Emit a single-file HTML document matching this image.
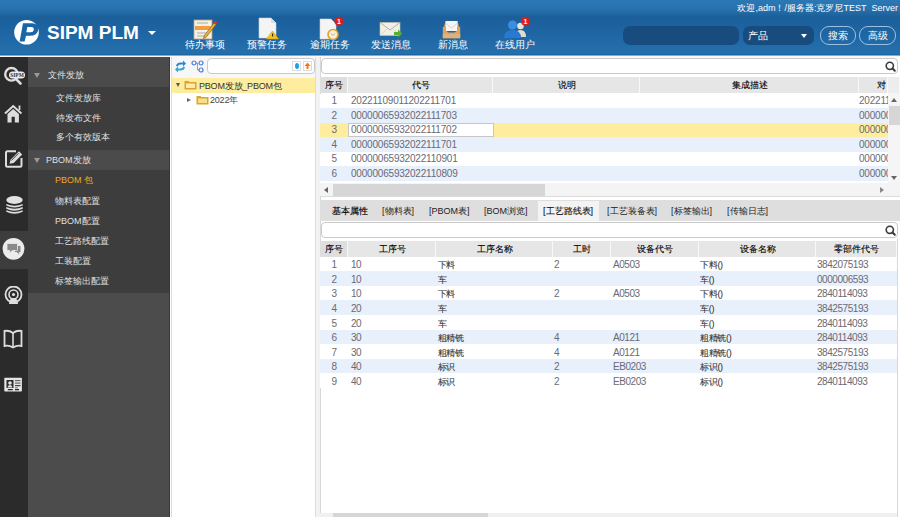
<!DOCTYPE html>
<html><head><meta charset="utf-8">
<style>
*{box-sizing:border-box;margin:0;padding:0}
html,body{width:900px;height:517px;overflow:hidden;background:#fff;font-family:"Liberation Sans",sans-serif}
.a{position:absolute}
#hdr{left:0;top:0;width:900px;height:58px;background:linear-gradient(#2b78b4 0px,#2672ae 9px,#1b5f9a 17px,#1d64a1 30px,#2470ad 54px,#1a5e9a 54.8px,#1a5e9a 55.4px,#f6f8fa 55.6px,#f8f9fa 58px);}
#hline{display:none}
.brand{left:47px;top:22px;color:#fff;font-weight:bold;font-size:19px;line-height:22px;white-space:nowrap}
.tb{color:#fff;font-size:10px;line-height:10px;white-space:nowrap;top:39.5px;text-align:center}
.welcome{right:2px;top:3px;color:#fff;font-size:9px;line-height:10px;white-space:nowrap}
#side1{left:0;top:57px;width:28px;height:460px;background:#2b2b2b}
#side2{left:28px;top:57px;width:142px;height:460px;background:#4c4c4c}
.mh{left:28px;width:141px;background:#4b4b4b}
.mi{left:28px;width:141px;background:#3d3d3d}
.mt{color:#e0e0e0;font-size:9px;line-height:12px;white-space:nowrap}
.tri{width:0;height:0;border-left:3.5px solid transparent;border-right:3.5px solid transparent;border-top:5px solid #999}
.inp{background:#fff;border:1px solid #c9c9c9;border-radius:4px}
.gh{top:77px;height:16px;background:#e6e6e6;border-right:1px solid #f8f8f8}
.ght{color:#000;font-size:9px;line-height:16px;text-align:center;white-space:nowrap;-webkit-text-stroke:0.12px #000}
.gr{height:14.6px}
.gt{color:#6a6a74;font-size:10px;letter-spacing:-0.45px;line-height:14px;white-space:nowrap}
.gt1{letter-spacing:-0.2px}
.gc{font-size:9px;letter-spacing:-0.3px;color:#333;-webkit-text-stroke:0.08px #333}
.num{text-align:center}
.tab{top:201.2px;color:#222;font-size:9px;line-height:21px;white-space:nowrap}

</style></head><body>
<div id="hdr" class="a"></div>
<div id="hline" class="a"></div>
<!-- logo -->
<svg class="a" style="left:10px;top:16px" width="34" height="32" viewBox="0 0 34 32">
 <circle cx="16.5" cy="16.2" r="12.3" fill="#fff"/>
 <path d="M13 7.3 L22 7.3 Q28.8 7.6 28.3 13.5 Q27.6 19.8 19.5 19.8 L16 19.8 L14.6 25.4 L9.6 25.4 Z" fill="#1a64a8"/>
 <path d="M17.3 11 L21.3 11 Q24.2 11.2 23.8 13.8 Q23.4 16.3 20.5 16.3 L16.3 16.3 Z" fill="#fff"/>
</svg>
<div class="a brand">SIPM PLM</div>
<div class="a" style="left:148px;top:31px;width:0;height:0;border-left:4px solid transparent;border-right:4px solid transparent;border-top:4px solid #fff"></div>

<!-- toolbar icons -->
<svg class="a" style="left:193px;top:19px" width="25" height="21" viewBox="0 0 25 21">
 <rect x="1" y="1" width="18" height="19" fill="#f4f0e6" stroke="#b9a27a" stroke-width="0.8"/>
 <rect x="2" y="7" width="16" height="4" fill="#f0a040"/>
 <line x1="4" y1="4" x2="15" y2="4" stroke="#aaa" stroke-width="1"/>
 <line x1="4" y1="14" x2="15" y2="14" stroke="#aaa" stroke-width="1"/>
 <line x1="4" y1="17" x2="13" y2="17" stroke="#aaa" stroke-width="1"/>
 <path d="M11 17 L21 4 L23 5.5 L13 18.5 L10.5 19.5 Z" fill="#e8b030" stroke="#7a5a20" stroke-width="0.6"/>
 <circle cx="22.5" cy="3.5" r="1.5" fill="#e03030"/>
</svg>
<svg class="a" style="left:257px;top:17px" width="23" height="23" viewBox="0 0 23 23">
 <path d="M2 1 L14 1 L19 6 L19 21 L2 21 Z" fill="#f4f4f4" stroke="#d0d0d0" stroke-width="0.6"/>
 <path d="M14 1 L14 6 L19 6" fill="#ddd"/>
 <path d="M15.5 14 L21.5 22 L9.5 22 Z" fill="#f5c320" stroke="#c89a10" stroke-width="0.6"/>
 <rect x="15" y="16.5" width="1.2" height="3" fill="#333"/>
</svg>
<svg class="a" style="left:319px;top:15px" width="26" height="25" viewBox="0 0 26 25">
 <path d="M1 4 L12 4 L17 9 L17 24 L1 24 Z" fill="#f4f4f4" stroke="#d0d0d0" stroke-width="0.6"/>
 <circle cx="14" cy="19.5" r="5" fill="#f8f0d8" stroke="#e8a020" stroke-width="1.6"/>
 <path d="M12 18.5 L14 20.5 L16 18.5" stroke="#999" stroke-width="0.8" fill="none"/>
 <circle cx="20" cy="6.3" r="4.6" fill="#d81e1e"/>
 <text x="20" y="9" font-size="7" font-weight="bold" fill="#fff" text-anchor="middle" font-family="Liberation Sans">1</text>
</svg>
<svg class="a" style="left:379px;top:21px" width="24" height="17" viewBox="0 0 24 17">
 <rect x="1" y="1.5" width="20" height="13" fill="#f2efe6" stroke="#c8c0b0" stroke-width="0.6"/>
 <path d="M1 1.5 L11 9 L21 1.5" stroke="#a8a090" stroke-width="0.8" fill="none"/>
 <path d="M1 14.5 L8 8 M21 14.5 L14 8" stroke="#c8c0b0" stroke-width="0.6"/>
 <path d="M15 11 L19 11 L19 8.5 L23 12.5 L19 16.5 L19 14 L15 14 Z" fill="#5ab030"/>
</svg>
<svg class="a" style="left:442px;top:20px" width="20" height="19" viewBox="0 0 20 19">
 <path d="M1.5 7 L3.5 1.5 L15.5 1.5 L17.5 7 Z" fill="#c89050"/>
 <rect x="3.5" y="1" width="12" height="10" fill="#f6f6f6"/>
 <path d="M3.5 3 L9.5 8 L15.5 3" stroke="#cfcfcf" stroke-width="0.9" fill="none"/>
 <path d="M0.8 7 L3.5 7 L3.5 10.5 L6.5 12.5 L12.5 12.5 L15.5 10.5 L15.5 7 L18.2 7 L18.2 18.2 L0.8 18.2 Z" fill="#dba565"/>
 <rect x="0.8" y="14" width="17.4" height="4.2" fill="#e3b175"/>
</svg>
<svg class="a" style="left:503px;top:16px" width="28" height="23" viewBox="0 0 28 23">
 <circle cx="17.5" cy="10" r="3.3" fill="#e8e4dc"/>
 <path d="M12 21 Q12 14 17.5 14 Q23 14 23 21 Z" fill="#e0dcd2"/>
 <circle cx="9.5" cy="9" r="4.5" fill="#3a8ee0"/>
 <path d="M1 22 Q1 14 9.5 14 Q18 14 18 22 Z" fill="#2a78d0"/>
 <circle cx="22.5" cy="5.3" r="4.6" fill="#d81e1e"/>
 <text x="22.5" y="8" font-size="7" font-weight="bold" fill="#fff" text-anchor="middle" font-family="Liberation Sans">1</text>
</svg>

<div class="a tb" style="left:185px;width:39px">待办事项</div>
<div class="a tb" style="left:247px;width:38px">预警任务</div>
<div class="a tb" style="left:310px;width:38px">逾期任务</div>
<div class="a tb" style="left:371px;width:38px">发送消息</div>
<div class="a tb" style="left:438px;width:29px">新消息</div>
<div class="a tb" style="left:495px;width:38px">在线用户</div>
<div class="a welcome">欢迎,adm！/服务器:克罗尼TEST&nbsp; Server</div>

<!-- search controls -->
<div class="a" style="left:623px;top:26px;width:116px;height:19px;border-radius:7px;background:#194c7e"></div>
<div class="a" style="left:743px;top:26px;width:71px;height:19px;border-radius:7px;background:#194c7e"></div>
<div class="a" style="left:748px;top:26px;color:#fff;font-size:9.5px;line-height:19px">产品</div>
<div class="a" style="left:801px;top:34px;width:0;height:0;border-left:3.5px solid transparent;border-right:3.5px solid transparent;border-top:4px solid #fff"></div>
<div class="a" style="left:820px;top:26px;width:36px;height:19px;border-radius:9px;border:1px solid #9cc0e0;color:#fff;font-size:9.5px;line-height:17px;text-align:center">搜索</div>
<div class="a" style="left:859px;top:26px;width:37px;height:19px;border-radius:9px;border:1px solid #9cc0e0;color:#fff;font-size:9.5px;line-height:17px;text-align:center">高级</div>

<!-- sidebar -->
<div id="side1" class="a"></div>
<div id="side2" class="a"></div>
<div class="a mh" style="top:59px;height:28px"></div>
<div class="a mi" style="top:87px;height:62.5px"></div>
<div class="a mh" style="top:149.5px;height:20.5px"></div>
<div class="a mi" style="top:170px;height:123px"></div>
<div class="a" style="left:169px;top:57px;width:1px;height:460px;background:#383838"></div>
<div class="a" style="left:170px;top:57px;width:1px;height:460px;background:#fff"></div>
<div class="a" style="left:171px;top:57px;width:1px;height:460px;background:#dcdcdc"></div>

<div class="a tri" style="left:33.5px;top:73px"></div>
<div class="a mt" style="left:47.5px;top:69px">文件发放</div>
<div class="a mt" style="left:56px;top:92px">文件发放库</div>
<div class="a mt" style="left:56px;top:111.5px">待发布文件</div>
<div class="a mt" style="left:56px;top:131px">多个有效版本</div>
<div class="a tri" style="left:33.5px;top:157.5px"></div>
<div class="a mt" style="left:46px;top:154px">PBOM发放</div>
<div class="a mt" style="left:55px;top:173.5px;color:#f2a81c">PBOM 包</div>
<div class="a mt" style="left:55px;top:194.5px">物料表配置</div>
<div class="a mt" style="left:55px;top:214.5px">PBOM配置</div>
<div class="a mt" style="left:55px;top:234.5px">工艺路线配置</div>
<div class="a mt" style="left:55px;top:254.5px">工装配置</div>
<div class="a mt" style="left:55px;top:275px">标签输出配置</div>

<!-- sidebar icons -->
<div class="a" style="left:0;top:230.5px;width:28px;height:38px;background:#3d3d3d"></div>
<svg class="a" style="left:3px;top:66px" width="24" height="20" viewBox="0 0 24 20">
 <circle cx="8.5" cy="8.3" r="6.3" fill="none" stroke="#ddd" stroke-width="2.4"/>
 <line x1="13" y1="13" x2="17.5" y2="17.5" stroke="#ddd" stroke-width="2.6" stroke-linecap="round"/>
 <rect x="6" y="5.5" width="16" height="7" rx="3.5" fill="#eee"/>
 <text x="14" y="11" font-size="5.5" font-weight="bold" fill="#333" text-anchor="middle" font-family="Liberation Serif">SIPM</text>
</svg>
<svg class="a" style="left:4px;top:104px" width="19" height="20" viewBox="0 0 19 20">
 <path d="M1 9.5 L9.2 2 L17.4 9.5" fill="none" stroke="#ddd" stroke-width="2"/>
 <path d="M3.5 10 L9.2 5 L14.9 10 L14.9 18.5 L10.8 18.5 L10.8 12.8 L7.6 12.8 L7.6 18.5 L3.5 18.5 Z" fill="#ddd"/>
 <rect x="14.6" y="1.5" width="1.8" height="4.5" fill="#ddd"/>
</svg>
<svg class="a" style="left:4px;top:149px" width="20" height="20" viewBox="0 0 20 20">
 <path d="M12 2.2 L3.5 2.2 Q2 2.2 2 3.7 L2 16.3 Q2 17.8 3.5 17.8 L16 17.8 Q17.5 17.8 17.5 16.3 L17.5 9" fill="none" stroke="#ddd" stroke-width="2"/>
 <path d="M5.5 14.8 L6.5 10.8 L15 2.3 L18.2 5.5 L9.7 14 Z" fill="#ddd"/>
 <path d="M7.3 11.5 L14.5 4.3" stroke="#2b2b2b" stroke-width="0.9"/>
</svg>
<svg class="a" style="left:5.5px;top:195.5px" width="18" height="19" viewBox="0 0 18 19">
 <ellipse cx="8.5" cy="4" rx="8.2" ry="3.9" fill="#e2e2e2"/>
 <path d="M0.3 8 Q8.5 11.5 16.7 8 L16.7 9.5 Q8.5 13.5 0.3 9.5 Z" fill="#ddd"/>
 <path d="M0.3 11 Q8.5 14.5 16.7 11 L16.7 12.8 Q8.5 16.5 0.3 12.8 Z" fill="#ddd"/>
 <path d="M0.3 14.2 Q8.5 17.7 16.7 14.2 L16.7 15.8 Q8.5 19.5 0.3 15.8 Z" fill="#ddd"/>
</svg>
<svg class="a" style="left:2px;top:237px" width="24" height="24" viewBox="0 0 24 24">
 <circle cx="11.5" cy="11.8" r="10.9" fill="#ececec"/>
 <path d="M13.5 8.5 L18.5 8.5 Q19 8.5 19 9 L19 15 Q19 15.5 18.5 15.5 L17.5 15.5 L17.8 18.5 L14.8 15.5 L12 15.5 Z" fill="#8a8a8a" stroke="#ececec" stroke-width="1"/>
 <path d="M6 6.5 L14.5 6.5 Q15.5 6.5 15.5 7.5 L15.5 12.5 Q15.5 13.5 14.5 13.5 L10.5 13.5 L7.5 16.5 L8 13.5 L6 13.5 Q5 13.5 5 12.5 L5 7.5 Q5 6.5 6 6.5 Z" fill="#8a8a8a" stroke="#ececec" stroke-width="0.8"/>
</svg>
<svg class="a" style="left:4px;top:286px" width="20" height="19" viewBox="0 0 20 19">
 <circle cx="9.5" cy="8.5" r="8" fill="none" stroke="#ddd" stroke-width="1.8"/>
 <circle cx="9.5" cy="8.5" r="4.5" fill="none" stroke="#ddd" stroke-width="1.6"/>
 <circle cx="9.5" cy="8.5" r="1.6" fill="#ddd"/>
 <path d="M5 18 Q5 12 9.5 12 Q14 12 14 18 Z" fill="#ddd"/>
</svg>
<svg class="a" style="left:3px;top:329px" width="20" height="20" viewBox="0 0 20 20">
 <path d="M1.5 2 Q6 1 10 4 Q14 1 18.5 2 L18.5 17 Q14 16 10 18.5 Q6 16 1.5 17 Z" fill="none" stroke="#ddd" stroke-width="1.8"/>
 <line x1="10" y1="4" x2="10" y2="18" stroke="#ddd" stroke-width="1.6"/>
</svg>
<svg class="a" style="left:4px;top:377px" width="19" height="16" viewBox="0 0 19 16">
 <rect x="0.3" y="0.8" width="17.6" height="13.8" rx="0.8" fill="#e6e6e6"/>
 <rect x="2.5" y="3" width="7" height="8" fill="#2b2b2b"/>
 <circle cx="6" cy="6" r="1.8" fill="#e6e6e6"/>
 <path d="M3.5 10.5 Q3.8 8 6 8 Q8.2 8 8.5 10.5 Z" fill="#e6e6e6"/>
 <rect x="11" y="3" width="5.5" height="1.2" fill="#666"/>
 <rect x="11" y="5.5" width="5.5" height="1.2" fill="#666"/>
 <rect x="11" y="8" width="5.5" height="1.2" fill="#444"/>
 <rect x="11" y="10.3" width="3" height="1" fill="#777"/>
 <rect x="3.8" y="12" width="5" height="1.3" fill="#2b2b2b"/>
 <rect x="11" y="12" width="4" height="1.3" fill="#2b2b2b"/>
</svg>

<!-- tree panel -->
<div class="a" style="left:172px;top:57px;width:143px;height:20.5px;background:#f7f7f7"></div>
<div class="a" style="left:315px;top:57px;width:1px;height:460px;background:#dcdcdc"></div>
<div class="a" style="left:316px;top:57px;width:3.5px;height:460px;background:#f2f2f2"></div>
<div class="a" style="left:319.5px;top:57px;width:1px;height:460px;background:#d8d8d8"></div>
<svg class="a" style="left:174px;top:60px" width="13" height="13" viewBox="0 0 13 13">
 <path d="M2 6 Q2.5 2.5 6.5 2.5 L9 2.5 L9 0.5 L12 3.5 L9 6.5 L9 4.5 L6.5 4.5 Q4 4.5 4 6.5 Z" fill="#2a86d8"/>
 <path d="M11 7 Q10.5 10.5 6.5 10.5 L4 10.5 L4 12.5 L1 9.5 L4 6.5 L4 8.5 L6.5 8.5 Q9 8.5 9 6.5 Z" fill="#30a8d0"/>
</svg>
<svg class="a" style="left:191px;top:60px" width="13" height="13" viewBox="0 0 13 13">
 <circle cx="3" cy="3" r="2" fill="none" stroke="#4a7ad8" stroke-width="1.2"/>
 <circle cx="10" cy="3" r="2" fill="none" stroke="#4a7ad8" stroke-width="1.2"/>
 <circle cx="10" cy="10" r="2" fill="none" stroke="#4a7ad8" stroke-width="1.2"/>
 <path d="M5 3 L6.5 3 L6.5 10 L8 10" fill="none" stroke="#888" stroke-width="0.8"/>
</svg>
<div class="a inp" style="left:207px;top:58px;width:108px;height:16px"></div>
<div class="a" style="left:292px;top:61px;width:9px;height:10px;background:#fff;border:1px solid #ddd"></div>
<div class="a" style="left:294.5px;top:63px;width:4px;height:6px;border-radius:50%;background:#20a0e0"></div>
<div class="a" style="left:303px;top:61px;width:9px;height:10px;background:#fff;border:1px solid #ddd"></div>
<svg class="a" style="left:303px;top:61px" width="9" height="10" viewBox="0 0 9 10"><path d="M4.5 1.5 L7.5 5 L5.5 5 L5.5 8 L3.5 8 L3.5 5 L1.5 5 Z" fill="#f07820"/></svg>

<div class="a" style="left:172px;top:77.5px;width:143px;height:15px;background:#feed9e"></div>
<div class="a" style="left:176px;top:83px;width:0;height:0;border-left:2px solid transparent;border-right:2px solid transparent;border-top:4px solid #555"></div>
<svg class="a" style="left:183.5px;top:80px" width="13" height="10" viewBox="0 0 13 10">
 <path d="M0.5 1 L4.5 1 L5.5 2 L12.5 2 L12.5 9.5 L0.5 9.5 Z" fill="#dca42c"/>
 <rect x="2" y="3.5" width="9" height="4.5" fill="#fcecae"/>
</svg>
<div class="a gt" style="left:199px;top:78.5px;color:#333;line-height:14px;font-size:9px;letter-spacing:-0.2px">PBOM发放_PBOM包</div>
<div class="a" style="left:187px;top:98px;width:0;height:0;border-top:2.5px solid transparent;border-bottom:2.5px solid transparent;border-left:4px solid #666"></div>
<svg class="a" style="left:195.5px;top:95px" width="13" height="10" viewBox="0 0 13 10">
 <path d="M0.5 1 L4.5 1 L5.5 2 L12.5 2 L12.5 9.5 L0.5 9.5 Z" fill="#dca42c"/>
 <rect x="2" y="3.5" width="9" height="4.5" fill="#f8e08a"/>
</svg>
<div class="a gt" style="left:210px;top:93px;color:#444;line-height:14px;font-size:9px;letter-spacing:-0.2px">2022年</div>

<!-- right panel: search 1 -->
<div class="a inp" style="left:321px;top:58px;width:577px;height:16px"></div>
<svg class="a" style="left:884px;top:60px" width="13" height="13" viewBox="0 0 13 13">
 <circle cx="5.8" cy="5.8" r="3.6" fill="none" stroke="#3a3a3a" stroke-width="1.6"/>
 <line x1="8.5" y1="8.5" x2="10.8" y2="10.8" stroke="#3a3a3a" stroke-width="2" stroke-linecap="round"/>
</svg>

<!-- grid1 header -->
<div class="a gh" style="left:320px;width:28px;background:#dedede"></div>
<div class="a gh" style="left:348px;width:145px"></div>
<div class="a gh" style="left:493px;width:147px"></div>
<div class="a gh" style="left:640px;width:219px"></div>
<div class="a gh" style="left:859px;width:29px"></div>
<div class="a gh" style="left:888px;width:12px;background:#ededed"></div>
<div class="a ght" style="left:320px;width:28px;top:77px">序号</div>
<div class="a ght" style="left:348px;width:145px;top:77px">代号</div>
<div class="a ght" style="left:493px;width:147px;top:77px">说明</div>
<div class="a ght" style="left:640px;width:219px;top:77px">集成描述</div>
<div class="a ght" style="left:859px;width:29px;top:77px;text-align:right;padding-right:2px">对</div>
<div class="a" style="left:0;top:0;width:900px;height:183px;overflow:hidden"><div class="a gr" style="top:93.70px;left:320px;width:568px;background:#fff"></div>
<div class="a gt num" style="top:94.10px;left:320px;width:28px">1</div>
<div class="a gt gt1" style="top:94.10px;left:351px">20221109011202211701</div>
<div class="a gt gt1" style="top:94.10px;left:859px;width:29px;overflow:hidden">202211</div>
<div class="a gr" style="top:108.25px;left:320px;width:568px;background:#e8f0fc"></div>
<div class="a gt num" style="top:108.65px;left:320px;width:28px">2</div>
<div class="a gt gt1" style="top:108.65px;left:351px">00000065932022111703</div>
<div class="a gt gt1" style="top:108.65px;left:859px;width:29px;overflow:hidden">000000</div>
<div class="a gr" style="top:122.80px;left:320px;width:568px;background:#feed9e"></div>
<div class="a gt num" style="top:123.20px;left:320px;width:28px">3</div>
<div class="a" style="top:123.30px;left:348px;width:146px;height:14px;background:#fff;border:1px solid #c8c8c8"></div>
<div class="a gt gt1" style="top:123.20px;left:351px">00000065932022111702</div>
<div class="a gt gt1" style="top:123.20px;left:859px;width:29px;overflow:hidden">000000</div>
<div class="a gr" style="top:137.35px;left:320px;width:568px;background:#e8f0fc"></div>
<div class="a gt num" style="top:137.75px;left:320px;width:28px">4</div>
<div class="a gt gt1" style="top:137.75px;left:351px">00000065932022111701</div>
<div class="a gt gt1" style="top:137.75px;left:859px;width:29px;overflow:hidden">000000</div>
<div class="a gr" style="top:151.90px;left:320px;width:568px;background:#fff"></div>
<div class="a gt num" style="top:152.30px;left:320px;width:28px">5</div>
<div class="a gt gt1" style="top:152.30px;left:351px">00000065932022110901</div>
<div class="a gt gt1" style="top:152.30px;left:859px;width:29px;overflow:hidden">000000</div>
<div class="a gr" style="top:166.45px;left:320px;width:568px;background:#e8f0fc"></div>
<div class="a gt num" style="top:166.85px;left:320px;width:28px">6</div>
<div class="a gt gt1" style="top:166.85px;left:351px">00000065932022110809</div>
<div class="a gt gt1" style="top:166.85px;left:859px;width:29px;overflow:hidden">000000</div>
<div class="a gr" style="top:181.00px;left:320px;width:568px;background:#fff"></div>
<div class="a gt num" style="top:181.40px;left:320px;width:28px">7</div>
<div class="a gt gt1" style="top:181.40px;left:351px">00000065932022110808</div>
<div class="a gt gt1" style="top:181.40px;left:859px;width:29px;overflow:hidden">000000</div></div>
<!-- v scrollbar -->
<div class="a" style="left:888px;top:93px;width:12px;height:90px;background:#f5f5f5"></div>
<div class="a" style="left:889px;top:106px;width:11px;height:19px;background:#d6d6d6"></div>
<div class="a" style="left:891px;top:98px;width:0;height:0;border-left:3px solid transparent;border-right:3px solid transparent;border-bottom:4px solid #666"></div>
<div class="a" style="left:891px;top:176px;width:0;height:0;border-left:3px solid transparent;border-right:3px solid transparent;border-top:4px solid #666"></div>
<!-- h scrollbar -->
<div class="a" style="left:320px;top:183px;width:580px;height:13.5px;background:#f4f4f4;border-bottom:1px solid #dcdcdc"></div>
<div class="a" style="left:333px;top:184px;width:212px;height:12px;background:#d6d6d6"></div>
<div class="a" style="left:323.5px;top:187px;width:0;height:0;border-top:3px solid transparent;border-bottom:3px solid transparent;border-right:4px solid #666"></div>
<div class="a" style="left:880px;top:187px;width:0;height:0;border-top:3px solid transparent;border-bottom:3px solid transparent;border-left:4px solid #888"></div>

<!-- tabs -->
<div class="a" style="left:320px;top:200px;width:580px;height:21px;background:#dedede"></div>
<div class="a" style="left:538px;top:201px;width:61px;height:20px;background:#f3f3f3"></div>
<div class="a tab" style="left:332px;color:#000;-webkit-text-stroke:0.15px #000">基本属性</div>
<div class="a tab" style="left:382px">[物料表]</div>
<div class="a tab" style="left:429px">[PBOM表]</div>
<div class="a tab" style="left:484px">[BOM浏览]</div>
<div class="a tab" style="left:543px;color:#111;-webkit-text-stroke:0.1px #111">[工艺路线表]</div>
<div class="a tab" style="left:607px">[工艺装备表]</div>
<div class="a tab" style="left:671px">[标签输出]</div>
<div class="a tab" style="left:727px">[传输日志]</div>

<!-- search 2 -->
<div class="a inp" style="left:321px;top:221.5px;width:577px;height:16px"></div>
<svg class="a" style="left:884px;top:224px" width="13" height="13" viewBox="0 0 13 13">
 <circle cx="5.8" cy="5.8" r="3.6" fill="none" stroke="#3a3a3a" stroke-width="1.6"/>
 <line x1="8.5" y1="8.5" x2="10.8" y2="10.8" stroke="#3a3a3a" stroke-width="2" stroke-linecap="round"/>
</svg>

<!-- grid2 header -->
<div class="a gh" style="top:240.5px;height:16.3px;left:320px;width:28px;background:#dedede"></div>
<div class="a gh" style="top:240.5px;height:16.3px;left:348px;width:88px"></div>
<div class="a gh" style="top:240.5px;height:16.3px;left:436px;width:117px"></div>
<div class="a gh" style="top:240.5px;height:16.3px;left:553px;width:58px"></div>
<div class="a gh" style="top:240.5px;height:16.3px;left:611px;width:88px"></div>
<div class="a gh" style="top:240.5px;height:16.3px;left:699px;width:117px"></div>
<div class="a gh" style="top:240.5px;height:16.3px;left:816px;width:81px"></div>
<div class="a ght" style="top:241px;line-height:17px;left:320px;width:28px">序号</div>
<div class="a ght" style="top:241px;line-height:17px;left:348px;width:88px">工序号</div>
<div class="a ght" style="top:241px;line-height:17px;left:436px;width:117px">工序名称</div>
<div class="a ght" style="top:241px;line-height:17px;left:553px;width:58px">工时</div>
<div class="a ght" style="top:241px;line-height:17px;left:611px;width:88px">设备代号</div>
<div class="a ght" style="top:241px;line-height:17px;left:699px;width:117px">设备名称</div>
<div class="a ght" style="top:241px;line-height:17px;left:816px;width:81px">零部件代号</div>
<div class="a gr" style="top:256.80px;left:320px;width:577px;background:#fff"></div>
<div class="a gt num" style="top:258.30px;left:320px;width:28px">1</div>
<div class="a gt" style="top:258.30px;left:351px">10</div>
<div class="a gt gc" style="top:258.30px;left:437.5px">下料</div>
<div class="a gt" style="top:258.30px;left:554px">2</div>
<div class="a gt" style="top:258.30px;left:613px">A0503</div>
<div class="a gt gc" style="top:258.30px;left:700px">下料()</div>
<div class="a gt" style="top:258.30px;left:817px">3842075193</div>
<div class="a gr" style="top:271.35px;left:320px;width:577px;background:#e8f0fc"></div>
<div class="a gt num" style="top:272.85px;left:320px;width:28px">2</div>
<div class="a gt" style="top:272.85px;left:351px">10</div>
<div class="a gt gc" style="top:272.85px;left:437.5px">车</div>
<div class="a gt gc" style="top:272.85px;left:700px">车()</div>
<div class="a gt" style="top:272.85px;left:817px">0000006593</div>
<div class="a gr" style="top:285.90px;left:320px;width:577px;background:#fff"></div>
<div class="a gt num" style="top:287.40px;left:320px;width:28px">3</div>
<div class="a gt" style="top:287.40px;left:351px">10</div>
<div class="a gt gc" style="top:287.40px;left:437.5px">下料</div>
<div class="a gt" style="top:287.40px;left:554px">2</div>
<div class="a gt" style="top:287.40px;left:613px">A0503</div>
<div class="a gt gc" style="top:287.40px;left:700px">下料()</div>
<div class="a gt" style="top:287.40px;left:817px">2840114093</div>
<div class="a gr" style="top:300.45px;left:320px;width:577px;background:#e8f0fc"></div>
<div class="a gt num" style="top:301.95px;left:320px;width:28px">4</div>
<div class="a gt" style="top:301.95px;left:351px">20</div>
<div class="a gt gc" style="top:301.95px;left:437.5px">车</div>
<div class="a gt gc" style="top:301.95px;left:700px">车()</div>
<div class="a gt" style="top:301.95px;left:817px">3842575193</div>
<div class="a gr" style="top:315.00px;left:320px;width:577px;background:#fff"></div>
<div class="a gt num" style="top:316.50px;left:320px;width:28px">5</div>
<div class="a gt" style="top:316.50px;left:351px">20</div>
<div class="a gt gc" style="top:316.50px;left:437.5px">车</div>
<div class="a gt gc" style="top:316.50px;left:700px">车()</div>
<div class="a gt" style="top:316.50px;left:817px">2840114093</div>
<div class="a gr" style="top:329.55px;left:320px;width:577px;background:#e8f0fc"></div>
<div class="a gt num" style="top:331.05px;left:320px;width:28px">6</div>
<div class="a gt" style="top:331.05px;left:351px">30</div>
<div class="a gt gc" style="top:331.05px;left:437.5px">粗精铣</div>
<div class="a gt" style="top:331.05px;left:554px">4</div>
<div class="a gt" style="top:331.05px;left:613px">A0121</div>
<div class="a gt gc" style="top:331.05px;left:700px">粗精铣()</div>
<div class="a gt" style="top:331.05px;left:817px">2840114093</div>
<div class="a gr" style="top:344.10px;left:320px;width:577px;background:#fff"></div>
<div class="a gt num" style="top:345.60px;left:320px;width:28px">7</div>
<div class="a gt" style="top:345.60px;left:351px">30</div>
<div class="a gt gc" style="top:345.60px;left:437.5px">粗精铣</div>
<div class="a gt" style="top:345.60px;left:554px">4</div>
<div class="a gt" style="top:345.60px;left:613px">A0121</div>
<div class="a gt gc" style="top:345.60px;left:700px">粗精铣()</div>
<div class="a gt" style="top:345.60px;left:817px">3842575193</div>
<div class="a gr" style="top:358.65px;left:320px;width:577px;background:#e8f0fc"></div>
<div class="a gt num" style="top:360.15px;left:320px;width:28px">8</div>
<div class="a gt" style="top:360.15px;left:351px">40</div>
<div class="a gt gc" style="top:360.15px;left:437.5px">标识</div>
<div class="a gt" style="top:360.15px;left:554px">2</div>
<div class="a gt" style="top:360.15px;left:613px">EB0203</div>
<div class="a gt gc" style="top:360.15px;left:700px">标识()</div>
<div class="a gt" style="top:360.15px;left:817px">3842575193</div>
<div class="a gr" style="top:373.20px;left:320px;width:577px;background:#fff"></div>
<div class="a gt num" style="top:374.70px;left:320px;width:28px">9</div>
<div class="a gt" style="top:374.70px;left:351px">40</div>
<div class="a gt gc" style="top:374.70px;left:437.5px">标识</div>
<div class="a gt" style="top:374.70px;left:554px">2</div>
<div class="a gt" style="top:374.70px;left:613px">EB0203</div>
<div class="a gt gc" style="top:374.70px;left:700px">标识()</div>
<div class="a gt" style="top:374.70px;left:817px">2840114093</div>
<div class="a" style="left:897px;top:238px;width:1px;height:279px;background:#d8d8d8"></div>
<!-- bottom scrollbar -->
<div class="a" style="left:320px;top:512.5px;width:577px;height:5px;background:#f0f0f0"></div>
<div class="a" style="left:333px;top:513px;width:155px;height:4px;background:#d6d6d6"></div>

</body></html>
